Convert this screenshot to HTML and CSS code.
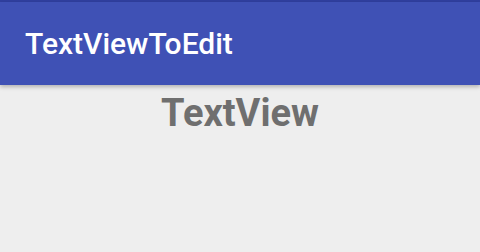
FILE: index.html
```html
<!DOCTYPE html>
<html>
<head>
<meta charset="utf-8">
<link rel="stylesheet" href="styles.css">
</head>
<body>
<div class="statusbar"></div>
<header class="toolbar"><span class="title">TextViewToEdit</span></header>
<main class="content"><div class="textview">TextView</div></main>
</body>
</html>
```
FILE: styles.css
```css
html, body {
  margin: 0;
  padding: 0;
  width: 480px;
  height: 252px;
  background: #eeeeee;
  overflow: hidden;
  font-family: Roboto, "Noto Sans", sans-serif;
}
.statusbar {
  height: 2px;
  background: #303f9f;
}
.toolbar {
  height: 83px;
  background: #3f51b5;
  display: flex;
  align-items: center;
  padding-left: 25px;
  box-shadow: 0 2px 4px rgba(0,0,0,0.25);
  position: relative;
}
.title {
  color: #ffffff;
  font-size: 30px;
  font-weight: 500;
}
.content {
  display: flex;
  justify-content: center;
}
.textview {
  color: #6f6f6f;
  font-size: 38px;
  font-weight: 700;
  line-height: 1;
  margin-top: 9px;
}
```
